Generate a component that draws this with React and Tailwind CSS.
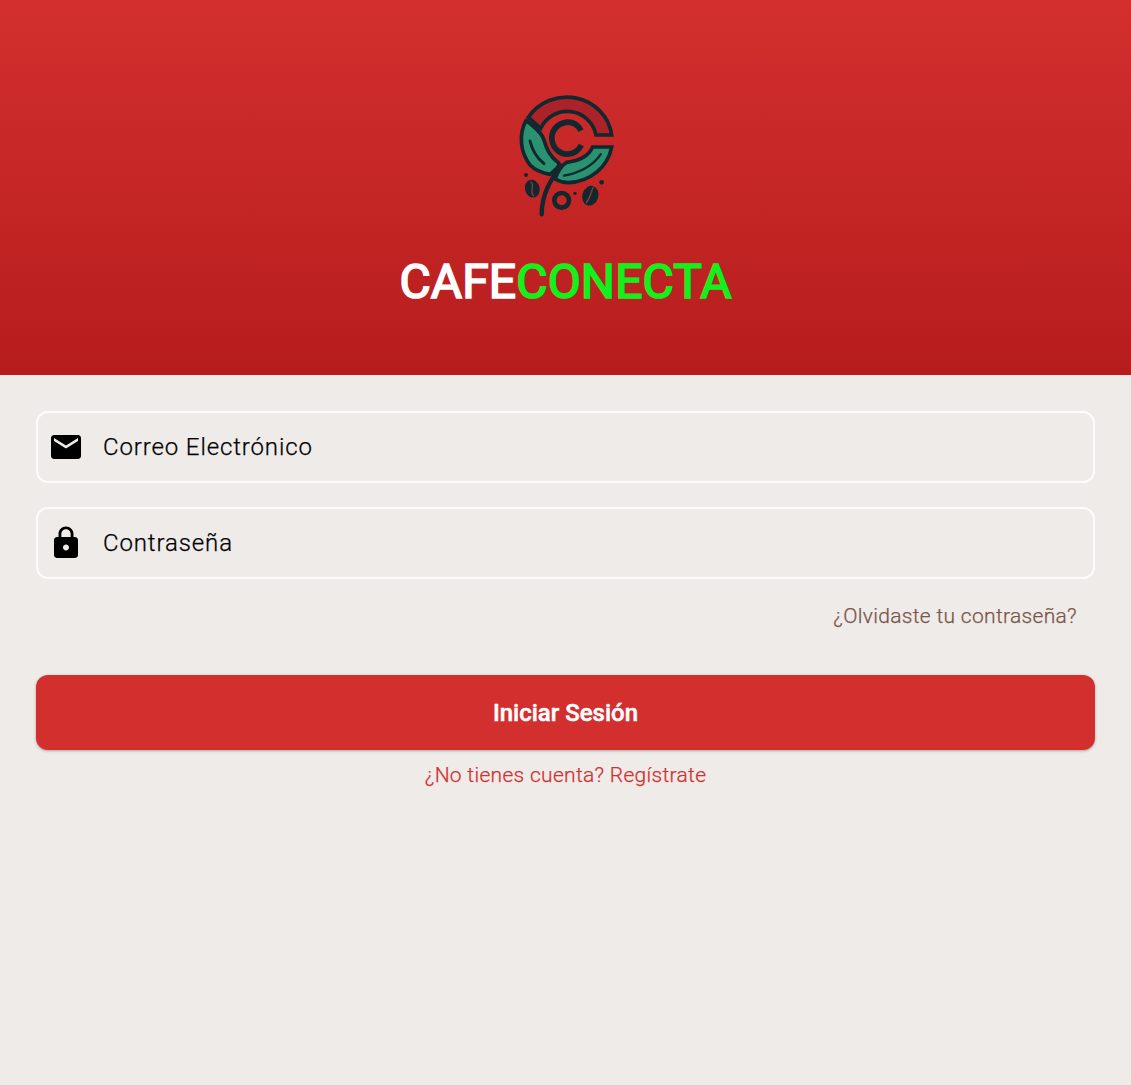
const fieldClass = "flex h-[72px] items-center rounded-[12px] border-2 border-white/85 pl-[10px]";
const fieldText = "ml-[19px] text-[24px] font-light leading-none tracking-[0.88px] text-black [-webkit-text-stroke:0.25px_black]";

function Logo() {
  const dark = "#10282e";
  const leaf = "#2a9270";
  return (
    <svg width="130" height="140" viewBox="3 0 390 420" fill="none" className="block">
      {/* top red arc */}
      <path d="M85 97 A136 130 0 0 1 335 150 L288 150 A88 88 0 0 0 122 130 Z" fill="#ab2229" stroke={dark} strokeWidth="11" />
      {/* left leaf */}
      <path d="M78 106 A136 130 0 0 0 90 240 C105 255 128 264 150 268 C172 250 180 240 176 234 C150 215 138 190 132 165 C124 140 100 125 78 106 Z" fill={leaf} stroke={dark} strokeWidth="11" strokeLinejoin="round" />
      <path d="M90 168 C97 198 112 220 132 236" stroke={dark} strokeWidth="9" strokeLinecap="round" />
      {/* right leaf */}
      <path d="M335 186 A136 130 0 0 1 205 293 C190 293 176 288 165 282 C172 262 182 244 200 232 C235 228 265 215 278 186 Z" fill={leaf} stroke={dark} strokeWidth="11" />
      <path d="M302 208 C280 240 245 262 192 272" stroke={dark} strokeWidth="7" strokeLinecap="round" />
      {/* inner C */}
      <path d="M243 137 C233 118 215 110 197 112 C170 116 152 140 156 166 C160 192 182 210 206 207 C224 205 237 194 244 180" stroke={dark} strokeWidth="17" />
      {/* stem */}
      <path d="M182 242 C160 275 125 320 125 388" stroke={dark} strokeWidth="13" strokeLinecap="round" />
      {/* beans */}
      <ellipse cx="97" cy="311" rx="22" ry="27" transform="rotate(-15 97 311)" fill={dark} />
      <path d="M92 290 C108 302 84 316 102 334" stroke="#8a3a3a" strokeWidth="4" />
      <circle cx="185" cy="346" r="22" stroke={dark} strokeWidth="14" />
      <ellipse cx="271" cy="332" rx="24" ry="30" transform="rotate(18 271 332)" fill={dark} />
      <path d="M280 306 C272 322 272 338 258 354" stroke="#8a3a3a" strokeWidth="4" />
      <circle cx="78" cy="270" r="6" fill={dark} />
      <circle cx="305" cy="292" r="7" fill={dark} />
      <circle cx="225" cy="325" r="5" fill={dark} />
    </svg>
  );
}

export default function App() {
  return (
    <div className="min-h-[1085px] bg-[#efebe9] font-['Roboto',sans-serif]">
      {/* header */}
      <div className="flex h-[375px] flex-col items-center bg-gradient-to-b from-[#d32f2f] to-[#b71c1c] pt-[85px]">
        <Logo />
        <h1 className="mt-[29px] text-[48px] font-normal leading-[56px] tracking-[0.12px] [-webkit-text-stroke:1.7px_currentColor]">
          <span className="text-white">CAFE</span>
          <span className="text-[#14f01e]">CONECTA</span>
        </h1>
      </div>

      {/* form */}
      <div className="px-[36px] pt-[36px]">
        <div className={fieldClass}>
          <svg width="36" height="36" viewBox="0 0 24 24" fill="black">
            <path d="M20 4H4c-1.1 0-1.99.9-1.99 2L2 18c0 1.1.9 2 2 2h16c1.1 0 2-.9 2-2V6c0-1.1-.9-2-2-2zm0 4l-8 5-8-5V6l8 5 8-5v2z" />
          </svg>
          <span className={fieldText}>Correo Electrónico</span>
        </div>
        <div className={`${fieldClass} mt-[24px]`}>
          <svg width="36" height="36" viewBox="0 0 24 24" fill="black">
            <path d="M18 8h-1V6c0-2.76-2.24-5-5-5S7 3.24 7 6v2H6c-1.1 0-2 .9-2 2v10c0 1.1.9 2 2 2h12c1.1 0 2-.9 2-2V10c0-1.1-.9-2-2-2zm-6 9c-1.1 0-2-.9-2-2s.9-2 2-2 2 .9 2 2-.9 2-2 2zm3.1-9H8.9V6c0-1.71 1.39-3.1 3.1-3.1 1.71 0 3.1 1.39 3.1 3.1v2z" />
          </svg>
          <span className={fieldText}>Contraseña</span>
        </div>

        <div className="mt-[25px] flex justify-end pr-[18px]">
          <span className="text-[21px] font-light leading-[24px] tracking-[0.32px] text-[#795548] [-webkit-text-stroke:0.25px_#795548]">¿Olvidaste tu contraseña?</span>
        </div>

        <button className="mt-[47px] flex h-[75px] w-full items-center justify-center rounded-[12px] bg-[#d32f2f] text-[24px] font-medium leading-none text-white shadow-[0_1px_3px_rgba(0,0,0,0.3)] [-webkit-text-stroke:0.5px_white]">
          Iniciar Sesión
        </button>

        <div className="mt-[13px] text-center text-[21px] font-light leading-[24px] tracking-[0.3px] text-[#d32f2f] [-webkit-text-stroke:0.25px_#d32f2f]">
          ¿No tienes cuenta? Regístrate
        </div>
      </div>
    </div>
  );
}
